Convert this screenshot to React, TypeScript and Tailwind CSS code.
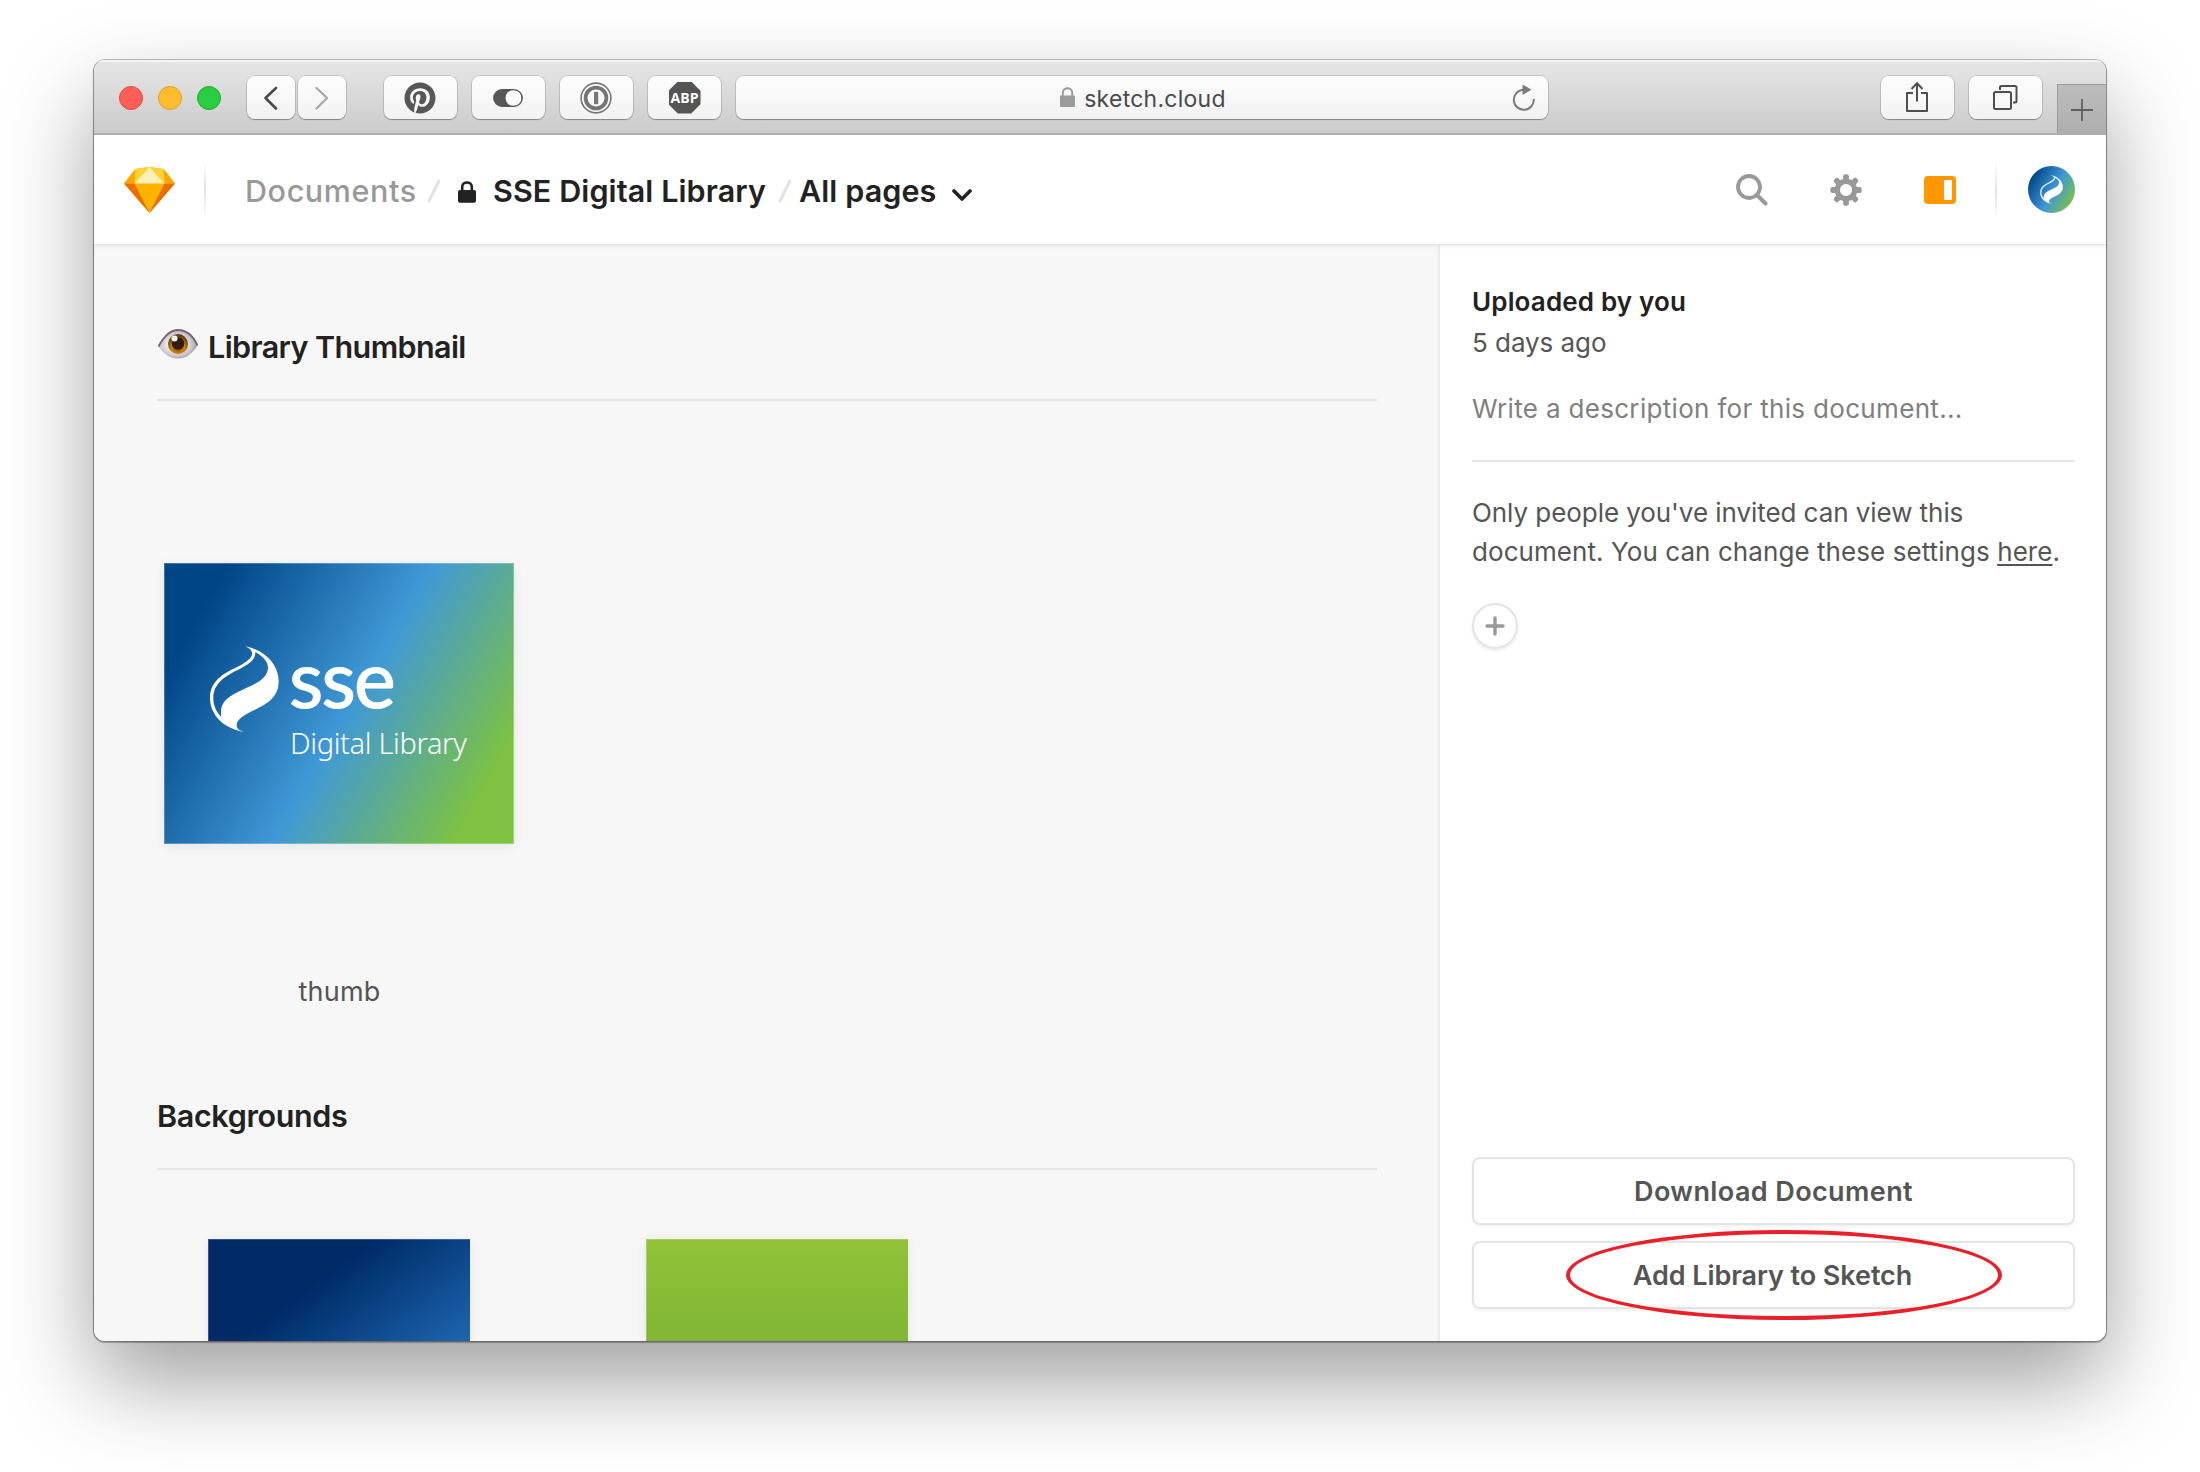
import React from 'react'
import { FaPinterest } from 'react-icons/fa'

const FLAME =
  'M282 289 C345 300 386 345 386 395 C386 440 355 462 315 480 C268 501 250 520 265 539 C270 543 276 545 284 547 C220 537 180 495 180 445 C180 395 220 372 255 355 C295 336 318 318 300 299 C296 295 290 291 282 289Z ' +
  'M316 307 C340 320 355 338 354 355 C352 388 315 404 278 420 C225 444 208 462 214 502 C197 485 190 465 190 445 C190 402 225 380 258 363 C295 345 318 330 316 307Z'

function ToolButton({ className, children }: { className: string; children?: React.ReactNode }) {
  return (
    <div
      className={`flex h-[43px] shrink-0 items-center justify-center rounded-[8px] bg-linear-to-b from-[#fdfdfd] to-[#f2f2f2] shadow-[0_0_0_1px_rgba(0,0,0,0.12),0_1px_1px_rgba(0,0,0,0.28)] ${className}`}
    >
      {children}
    </div>
  )
}

function BrowserBar() {
  return (
    <div className="flex h-[75px] shrink-0 items-center border-b-2 border-[#adadad] bg-linear-to-b from-[#e6e6e6] to-[#cbcbcb] pl-[25px] shadow-[inset_0_2px_0_#f3f3f3]">
      <div className="flex gap-[15px] pt-[2px]">
        <div className="size-6 rounded-full border border-[#e2463f] bg-[#ff5f57]" />
        <div className="size-6 rounded-full border border-[#e0a023] bg-[#ffbd2e]" />
        <div className="size-6 rounded-full border border-[#1dad2b] bg-[#28cd41]" />
      </div>
      <div className="ml-[26px] flex gap-[3px] pt-[2px]">
        <ToolButton className="w-[48px]">
          <svg width="16" height="26" viewBox="0 0 16 26" fill="none" stroke="#4a4a4a" strokeWidth="2.6" strokeLinecap="round" strokeLinejoin="round">
            <path d="M13 3 L2.500 13 L13 23.500" />
          </svg>
        </ToolButton>
        <ToolButton className="w-[48px]">
          <svg width="16" height="26" viewBox="0 0 16 26" fill="none" stroke="#a9a9a9" strokeWidth="2.4" strokeLinecap="round" strokeLinejoin="round">
            <path d="M2.500 3 L13 13 L2.500 23.500" />
          </svg>
        </ToolButton>
      </div>
      <div className="ml-[38px] flex gap-[15px] pt-[2px]">
        <ToolButton className="w-[73px]">
          <FaPinterest size={32} color="#575757" className="-ml-px" />
        </ToolButton>
        <ToolButton className="w-[73px]">
          <svg width="30" height="18" viewBox="0 0 30 18" className="-ml-px">
            <rect x="0.700" y="0.700" width="28.600" height="16.600" rx="8.300" fill="#575757" />
            <circle cx="20.500" cy="9" r="8" fill="#fbfbfb" />
            <rect x="0.700" y="0.700" width="28.600" height="16.600" rx="8.300" fill="none" stroke="#575757" strokeWidth="1.200" />
          </svg>
        </ToolButton>
        <ToolButton className="w-[73px]">
          <svg width="32" height="32" viewBox="0 0 32 32" fill="none" className="-ml-px">
            <circle cx="16" cy="16" r="14.900" stroke="#757575" strokeWidth="1.600" />
            <circle cx="16" cy="16" r="10.400" stroke="#757575" strokeWidth="3.800" />
            <rect x="14" y="9.800" width="4.200" height="12.400" fill="#757575" />
          </svg>
        </ToolButton>
        <ToolButton className="w-[73px]">
          <div className="flex size-8 items-center justify-center bg-[#555] font-['Open_Sans',sans-serif] text-[14px] font-bold leading-none text-white [clip-path:polygon(29%_0,71%_0,100%_29%,100%_71%,71%_100%,29%_100%,0_71%,0_29%)]">
            ABP
          </div>
        </ToolButton>
      </div>
      <div className="ml-[15px] pt-[2px]">
        <ToolButton className="relative w-[812px]">
          <svg width="17" height="21" viewBox="0 0 17 21" className="mt-[-1px] ml-[1px]">
            <path d="M3.800 9 V5.800 C3.800 -0.200 13.200 -0.200 13.200 5.800 V9" fill="none" stroke="#9b9b9b" strokeWidth="1.900" />
            <rect x="1" y="8.500" width="15" height="11.500" rx="0.800" fill="#9b9b9b" />
          </svg>
          <span className="ml-[8px] pt-[3px] text-[23px] leading-[30px] tracking-[0.250px] text-[#4a4a4a]">sketch.cloud</span>
          <svg width="24" height="28" viewBox="0 0 24 28" className="absolute right-[12px] top-[8px]">
            <path d="M11 5.800 A10 10 0 1 0 21.800 15" fill="none" stroke="#7b7b7b" strokeWidth="2" />
            <path d="M10.500 0.500 L19.500 5.700 L10.500 11Z" fill="#7b7b7b" />
          </svg>
        </ToolButton>
      </div>
      <div className="ml-auto flex gap-[15px] pt-[2px]">
        <ToolButton className="w-[73px]">
          <svg width="24" height="32" viewBox="0 0 24 32" fill="none" stroke="#4e4e4e" strokeWidth="2" className="-ml-px -mt-px">
            <path d="M8 12 H2 V30 H22 V12 H16" strokeLinejoin="round" />
            <path d="M12 20.500 V2.500 M6.500 8 L12 2.300 L17.500 8" />
          </svg>
        </ToolButton>
        <ToolButton className="w-[73px]">
          <svg width="26" height="26" viewBox="0 0 26 26" fill="none" stroke="#4e4e4e" strokeWidth="2" className="-ml-px -mt-px">
            <rect x="2" y="8" width="17" height="17" rx="1.500" />
            <path d="M8 6 V3.500 Q8 2 9.500 2 H23 Q24.500 2 24.500 3.500 V17 Q24.500 18.500 23 18.500 H21" />
          </svg>
        </ToolButton>
      </div>
      <div className="ml-[15px] flex h-[49px] w-[49px] shrink-0 items-center justify-center self-end border-l border-t border-[#9c9c9c] bg-linear-to-b from-[#bcbcbc] to-[#aeaeae]">
        <svg width="22" height="22" viewBox="0 0 22 22" stroke="#5f5f5f" strokeWidth="1.800" className="mt-[2px]">
          <path d="M11 0 V22 M0 11 H22" />
        </svg>
      </div>
    </div>
  )
}

function Slash() {
  return (
    <svg width="16" height="26" viewBox="0 0 16 26" stroke="#e3e3e3" strokeWidth="3" strokeLinecap="round">
      <path d="M12.800 3 L3 23" />
    </svg>
  )
}

function Gear() {
  return (
    <svg width="32" height="32" viewBox="-16 -16 32 32" fill="#999">
      {[0, 45, 90, 135, 180, 225, 270, 315].map((a) => (
        <rect key={a} x="-2.900" y="-15.700" width="5.800" height="8" rx="2" transform={`rotate(${a})`} />
      ))}
      <circle r="8.700" fill="none" stroke="#999" strokeWidth="5.200" />
    </svg>
  )
}

function Header() {
  return (
    <div className="relative z-10 flex h-[109px] shrink-0 items-center bg-white pl-[30px] pr-[31px] shadow-[0_1px_0_#e6e6e6,0_3px_3px_rgba(0,0,0,0.05)]">
      <svg width="51" height="46" viewBox="0 0 51 46">
        <path d="M11.300 2 L25.500 0 L39.700 2 L51 16.500 L25.500 46 L0 16.500Z" fill="#ffb300" />
        <path d="M0 16.500 H10.500 L25.500 46Z M51 16.500 H40.500 L25.500 46Z" fill="#eb6c00" />
        <path d="M0 16.500 L11.300 2 L10.500 16.500Z M51 16.500 L39.700 2 L40.500 16.500Z" fill="#ffa600" />
        <path d="M11.300 2 L25.500 0 L10.500 16.500Z M39.700 2 L25.500 0 L40.500 16.500Z" fill="#fdd231" />
        <path d="M25.500 0 L10.500 16.500 H40.500Z" fill="#feeeb7" />
      </svg>
      <div className="ml-[29px] h-[58px] w-[2px] bg-linear-to-b from-white via-[#e2e2e2] to-white" />
      <div className="ml-[39px] flex items-center pt-[3px] text-[30.500px] font-medium leading-[40px] tracking-[0.600px] text-[#222]">
        <span className="w-[181px] text-[#999]">Documents</span>
        <Slash />
        <svg width="18" height="22" viewBox="0 0 18 22" className="ml-[16px] mt-[2px]">
          <path d="M4.200 10 V6 C4.200 -0.100 13.800 -0.100 13.800 6 V10" fill="none" stroke="#222" strokeWidth="2.600" />
          <rect x="0" y="9" width="18" height="12.700" rx="2" fill="#222" />
        </svg>
        <span className="ml-[17px] w-[284px] whitespace-nowrap font-semibold tracking-[0.100px]">SSE Digital Library</span>
        <Slash />
        <span className="ml-[6px] w-[153px] whitespace-nowrap font-semibold tracking-[0.100px]">All pages</span>
        <svg width="20" height="14" viewBox="0 0 20 14" fill="none" stroke="#222" strokeWidth="3.600" strokeLinecap="round" strokeLinejoin="round" className="mt-[7px]">
          <path d="M2 3 L10 11 L18 3" />
        </svg>
      </div>
      <svg width="32" height="32" viewBox="0 0 32 32" fill="none" stroke="#999" className="ml-auto">
        <circle cx="13" cy="13" r="11" strokeWidth="3.800" />
        <path d="M21 21 L29.500 29.500" strokeWidth="4" strokeLinecap="round" />
      </svg>
      <div className="ml-[62px]">
        <Gear />
      </div>
      <div className="ml-[62px] flex h-[28px] w-[32px] justify-end rounded-[4px] bg-[#ff9800] py-[4px] pr-[4px]">
        <div className="w-[8px] rounded-[1px] bg-white" />
      </div>
      <div className="ml-[39px] h-[58px] w-[2px] bg-linear-to-b from-white via-[#e2e2e2] to-white" />
      <div className="ml-[31px] flex size-[47px] items-center justify-center rounded-full bg-[linear-gradient(120deg,#004586_12%,#4098d7_54%,#7dc242_90%)]">
        <svg width="25" height="29" viewBox="176 285 214 266">
          <path d={FLAME} fill="#fff" fillRule="evenodd" stroke="#fff" strokeWidth="2" />
        </svg>
      </div>
    </div>
  )
}

function Eye() {
  return (
    <svg width="40" height="30" viewBox="0 0 40 30" className="ml-[1px] mt-[-6px]">
      <defs>
        <radialGradient id="white" cx="0.45" cy="0.5" r="0.6">
          <stop offset="0.3" stopColor="#f3eef0" />
          <stop offset="0.7" stopColor="#cdc2ca" />
          <stop offset="1" stopColor="#8d7f8a" />
        </radialGradient>
        <radialGradient id="iris" cx="0.5" cy="0.65" r="0.55">
          <stop offset="0" stopColor="#7a4300" />
          <stop offset="0.6" stopColor="#c88500" />
          <stop offset="1" stopColor="#5f4312" />
        </radialGradient>
      </defs>
      <path d="M0.500 17.500 C7 5.500 13 1 20 1 C28 1 35 6.500 39.500 16.500 C34 25 28 29.500 20 29.500 C12 29.500 7 26 0.500 17.500Z" fill="url(#white)" />
      <path d="M0.500 17.500 C7 5.500 13 1 20 1 C28 1 35 6.500 39.500 16.500" fill="none" stroke="#6f6a70" strokeWidth="1.800" />
      <circle cx="20" cy="15" r="10" fill="url(#iris)" />
      <circle cx="20" cy="14.500" r="6.300" fill="#33191b" />
      <circle cx="16.500" cy="9.500" r="3" fill="#fff" />
    </svg>
  )
}

function Canvas() {
  return (
    <div className="flex w-[1344px] shrink-0 flex-col bg-[#f7f7f7] pl-[63px] pr-[61px] pt-[83px]">
      <div className="flex h-[74px] shrink-0 items-start border-b-2 border-[#e6e6e6]">
        <div className="flex h-[40px] items-center">
          <Eye />
          <h2 className="ml-[10px] whitespace-nowrap text-[30.500px] font-semibold leading-[40px] tracking-[-0.600px] text-[#222]">Library Thumbnail</h2>
        </div>
      </div>
      <div className="ml-[7px] mt-[162px] flex w-[350px] shrink-0 flex-col items-center">
        <div className="flex h-[281px] w-full items-start bg-[linear-gradient(120deg,#004586_12.500%,#4098d7_52.500%,#7dc242_88%)] shadow-[inset_0_0_0_1px_rgba(255,255,255,0.25),0_2px_10px_rgba(0,0,0,0.08)]">
          <svg width="71" height="88" viewBox="177 286 213 264" className="ml-[45px] mt-[82px] shrink-0">
            <path d={FLAME} fill="#fff" fillRule="evenodd" />
          </svg>
          <div className="ml-[9px] mt-[72px] flex flex-col text-white">
            <span className="font-['Lato',sans-serif] text-[79px] leading-[86px] tracking-[-1.700px] [-webkit-text-stroke:1.200px_white]">sse</span>
            <span className="ml-[1px] mt-[4px] whitespace-nowrap font-['Noto_Sans',sans-serif] text-[29px] font-light leading-[36px] tracking-[-0.350px]">Digital Library</span>
          </div>
        </div>
        <span className="ml-px mt-[128px] text-[27px] leading-[40px] tracking-[0.250px] text-[#555]">thumb</span>
      </div>
      <div className="mt-[84px] h-[74px] shrink-0 border-b-2 border-[#e6e6e6]">
        <h2 className="text-[30.500px] font-semibold leading-[40px] tracking-[-0.350px] text-[#222]">Backgrounds</h2>
      </div>
      <div className="ml-[51px] mt-[69px] flex h-[102px] shrink-0 gap-[176px]">
        <div className="w-[262px] bg-[linear-gradient(143.500deg,#002b67_42%,#1c67b0_100%)] shadow-[inset_1px_1px_0_rgba(255,255,255,0.2),0_2px_10px_rgba(0,0,0,0.08)]" />
        <div className="w-[262px] bg-linear-to-b from-[#92c338] to-[#80b634] shadow-[inset_1px_1px_0_rgba(255,255,255,0.2),0_2px_10px_rgba(0,0,0,0.08)]" />
      </div>
    </div>
  )
}

function Sidebar() {
  return (
    <div className="flex grow flex-col border-l-2 border-[#ececec] bg-white pb-[32px] pl-[32px] pr-[31px] pt-[37px] text-[26px] text-[#555]">
      <div className="font-semibold leading-[41px] tracking-[0.150px] text-[#222]">Uploaded by you</div>
      <div className="leading-[41px] tracking-[-0.050px]">5 days ago</div>
      <div className="mt-[26px] leading-[40px] tracking-[0.320px] text-[#808080]">Write a description for this document...</div>
      <div className="mt-[31px] h-[2px] shrink-0 bg-[#e6e6e6]" />
      <p className="mt-[31px] whitespace-nowrap leading-[39px] tracking-[-0.060px]">
        Only people you've invited can view this
        <br />
        <span className="tracking-[0.070px]">
          document. You can change these settings <span className="underline decoration-2 underline-offset-[3px]">here</span>.
        </span>
      </p>
      <div className="mt-[32px] flex size-[46px] items-center justify-center rounded-full border-2 border-[#e4e4e4] shadow-[0_2px_3px_rgba(0,0,0,0.08)]">
        <svg width="20" height="20" viewBox="0 0 20 20" stroke="#999" strokeWidth="3.400" strokeLinecap="round">
          <path d="M10 2 V18 M2 10 H18" />
        </svg>
      </div>
      <div className="mt-auto flex flex-col gap-[16px] text-[27px] font-semibold">
        <div className="flex h-[68px] items-center justify-center rounded-[8px] border-2 border-[#e4e4e4] pt-[3px] tracking-[0.400px] shadow-[0_2px_3px_rgba(0,0,0,0.05)]">
          Download Document
        </div>
        <div className="relative flex h-[68px] items-center justify-center rounded-[8px] border-2 border-[#e4e4e4] pr-[2px] pt-[3px] tracking-[-0.080px] shadow-[0_2px_3px_rgba(0,0,0,0.05)]">
          Add Library to Sketch
          <div className="absolute left-[92px] top-[-13px] h-[90px] w-[436px] rounded-[50%] border-4 border-[#e8202a]" />
        </div>
      </div>
    </div>
  )
}

export default function App() {
  return (
    <div className="h-[1472px] w-[2200px] overflow-hidden bg-white px-[94px] pt-[60px] font-['Inter',sans-serif]">
      <div className="rounded-[11px] shadow-[0_0_0_1px_rgba(0,0,0,0.22),0_1px_1px_1px_rgba(0,0,0,0.25),0_40px_90px_rgba(0,0,0,0.38)]">
        <div className="flex h-[1281px] w-[2012px] flex-col overflow-hidden rounded-[11px]">
          <BrowserBar />
          <Header />
          <div className="flex grow overflow-hidden">
            <Canvas />
            <Sidebar />
          </div>
        </div>
      </div>
    </div>
  )
}
